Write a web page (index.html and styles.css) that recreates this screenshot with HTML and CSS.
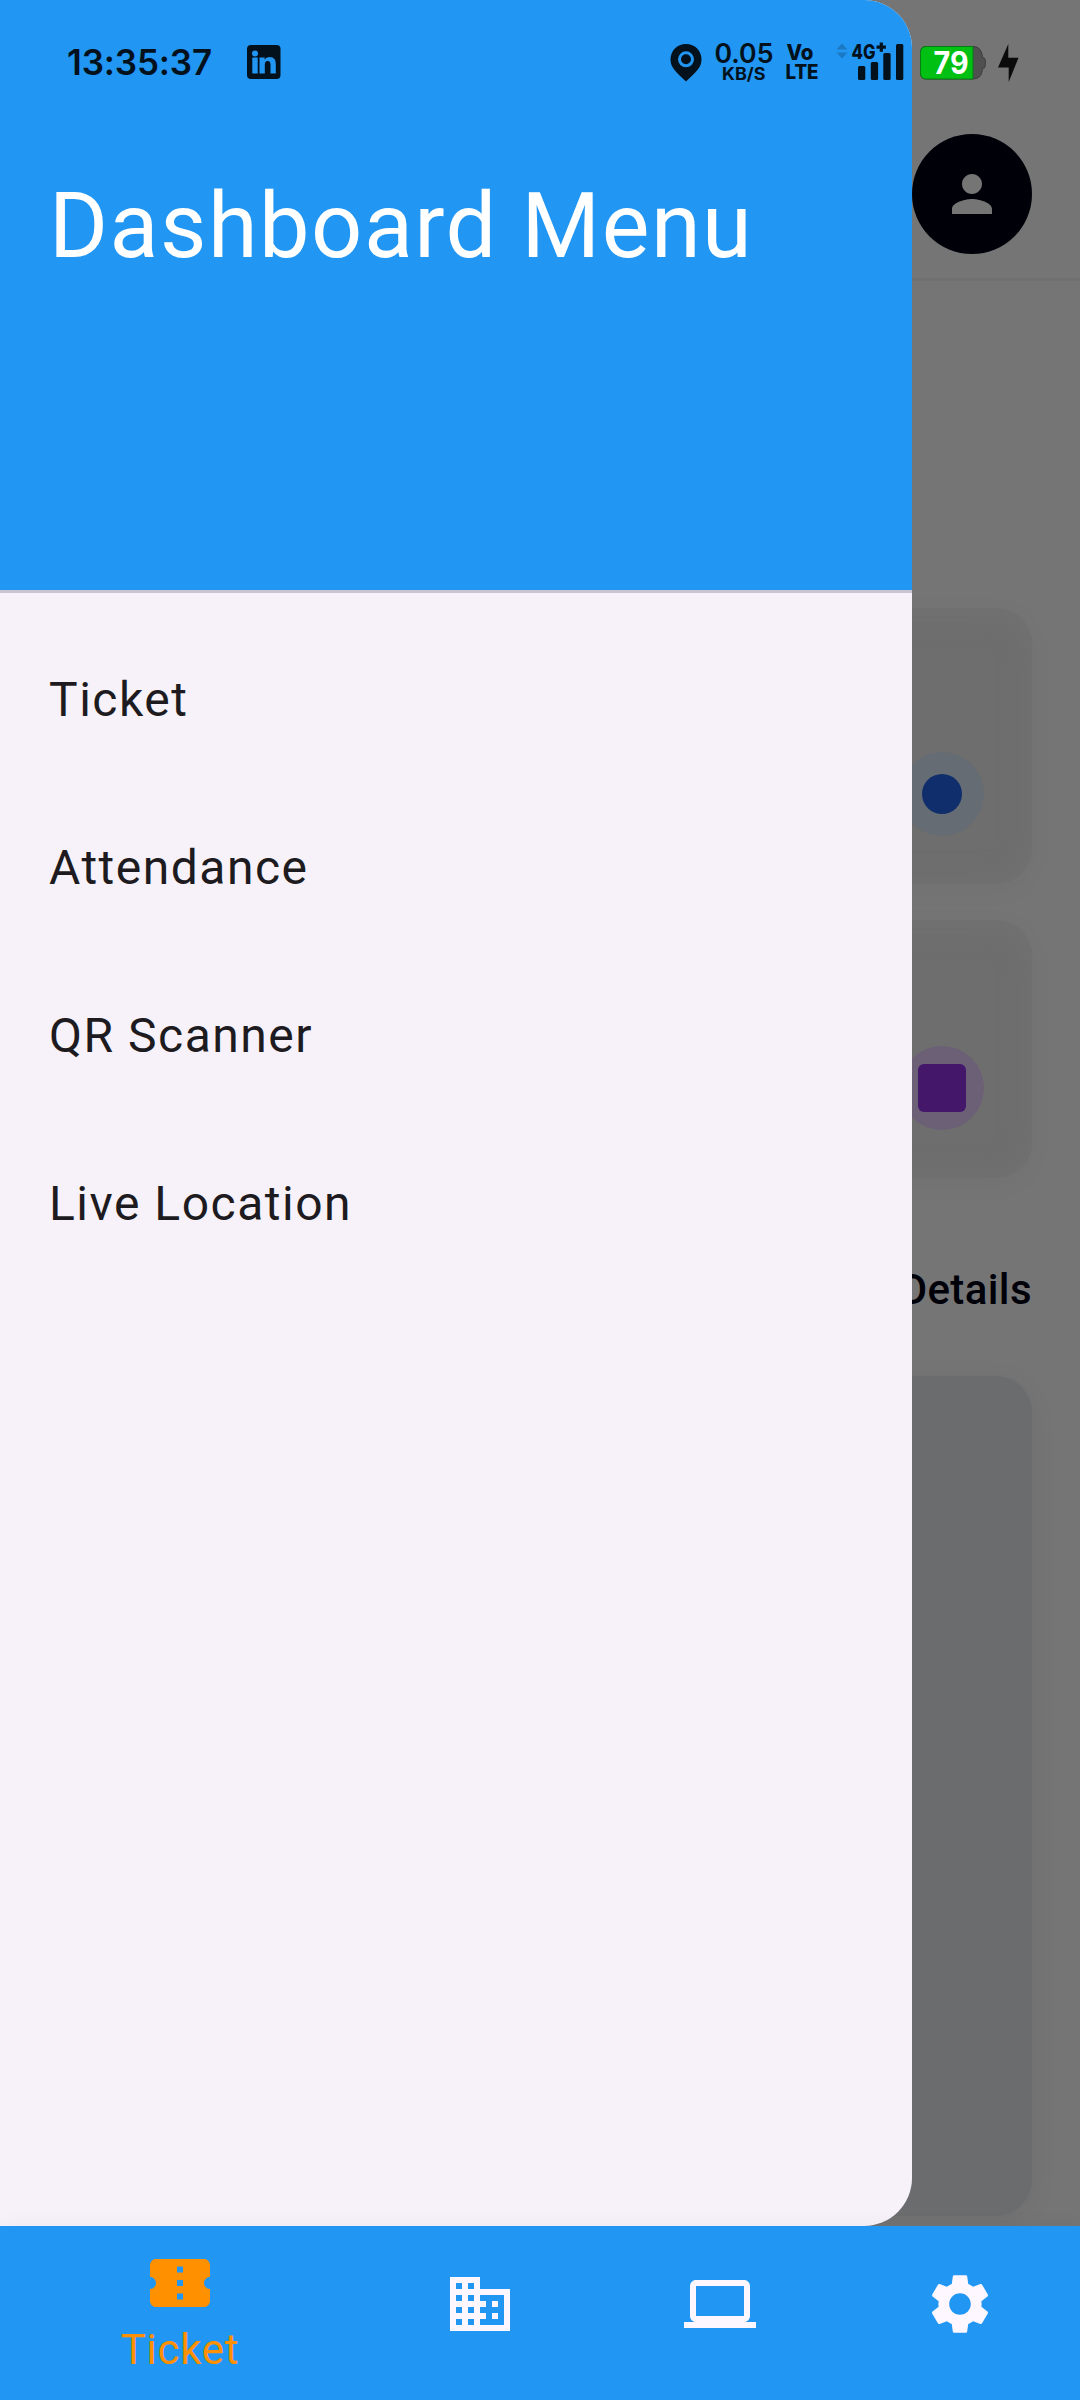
FILE: index.html
```html
<!DOCTYPE html>
<html lang="en">
<head>
<meta charset="utf-8">
<title>Dashboard</title>
<link rel="stylesheet" href="styles.css">
</head>
<body>
<div class="app">
  <main class="dashboard">
    <header class="topbar">
      <div class="avatar">
        <svg class="avatar-icon" viewBox="0 0 24 24"><path d="M12 12c2.21 0 4-1.79 4-4s-1.79-4-4-4-4 1.79-4 4 1.79 4 4 4zm0 2c-2.67 0-8 1.34-8 4v2h16v-2c0-2.66-5.33-4-8-4z"/></svg>
      </div>
    </header>
    <section class="content">
      <article class="card card-first"><div class="badge badge-blue"><span class="dot"></span></div></article>
      <article class="card card-second"><div class="badge badge-purple"><span class="square"></span></div></article>
      <h2 class="details">Details</h2>
      <div class="panel"></div>
    </section>
  </main>

  <aside class="drawer">
    <div class="drawer-header"><h1 class="drawer-title">Dashboard Menu</h1></div>
    <ul class="menu">
      <li class="menu-item">Ticket</li>
      <li class="menu-item">Attendance</li>
      <li class="menu-item">QR Scanner</li>
      <li class="menu-item">Live Location</li>
    </ul>
  </aside>

  <nav class="bottom-nav">
    <a class="nav-item nav-item-active">
      <svg class="nav-icon" viewBox="0 0 24 24"><path d="M22 10V6c0-1.110-.9-2-2-2H4c-1.100 0-1.990.89-1.990 2v4c1.100 0 1.990.9 1.990 2s-.89 2-2 2v4c0 1.100.9 2 2 2h16c1.100 0 2-.9 2-2v-4c-1.100 0-2-.9-2-2s.9-2 2-2zm-9 7.500h-2v-2h2v2zm0-4.500h-2v-2h2v2zm0-4.500h-2v-2h2v2z"/></svg>
      <span class="nav-label">Ticket</span>
    </a>
    <a class="nav-item">
      <svg class="nav-icon" viewBox="0 0 24 24"><path d="M12 7V3H2v18h20V7H12zM6 19H4v-2h2v2zm0-4H4v-2h2v2zm0-4H4V9h2v2zm0-4H4V5h2v2zm4 12H8v-2h2v2zm0-4H8v-2h2v2zm0-4H8V9h2v2zm0-4H8V5h2v2zm10 12h-8v-2h2v-2h-2v-2h2v-2h-2V9h8v10zm-2-8h-2v2h2v-2zm0 4h-2v2h2v-2z"/></svg>
    </a>
    <a class="nav-item">
      <svg class="nav-icon" viewBox="0 0 24 24"><path d="M20 18c1.100 0 2-.9 2-2V6c0-1.100-.9-2-2-2H4c-1.100 0-2 .9-2 2v10c0 1.100.9 2 2 2H0v2h24v-2h-4zM4 6h16v10H4V6z"/></svg>
    </a>
    <a class="nav-item">
      <svg class="nav-icon" viewBox="0 0 24 24"><path d="M19.140 12.940c.04-.3.06-.61.06-.94 0-.32-.02-.64-.07-.94l2.030-1.580c.18-.14.23-.41.12-.61l-1.920-3.320c-.12-.22-.37-.29-.59-.22l-2.390.96c-.5-.38-1.030-.7-1.620-.94L14.400 2.810c-.04-.24-.24-.41-.48-.41h-3.840c-.24 0-.43.17-.47.41L9.250 5.350c-.59.24-1.130.57-1.620.94l-2.390-.96c-.22-.08-.47 0-.59.22L2.740 8.870c-.12.21-.08.47.12.61l2.030 1.580c-.05.3-.09.63-.09.94s.02.64.07.94l-2.030 1.580c-.18.14-.23.41-.12.61l1.920 3.320c.12.22.37.29.59.22l2.390-.96c.5.38 1.030.7 1.620.94l.36 2.540c.05.24.24.41.48.41h3.840c.24 0 .44-.17.47-.41l.36-2.540c.59-.24 1.130-.56 1.620-.94l2.390.96c.22.08.47 0 .59-.22l1.920-3.320c.12-.22.07-.47-.12-.61l-2.010-1.580zM12 15.600c-1.980 0-3.600-1.620-3.600-3.600s1.620-3.600 3.600-3.600 3.600 1.620 3.600 3.600-1.620 3.600-3.600 3.600z"/></svg>
    </a>
  </nav>

  <div class="status-bar">
    <span class="clock">13:35:37</span>
    <svg class="linkedin" viewBox="0 0 34 34" width="34" height="34"><rect width="33.500" height="34" rx="4"/><g class="cutout"><circle cx="8" cy="8.600" r="3"/><path d="M5.300 12.500h5.400v16H5.300zM12.500 12.500h5.100v2.200c1-1.700 2.800-2.600 5-2.600 4.600 0 6.200 2.900 6.200 6.900v9.500h-5.300v-8.500c0-2-.5-4-2.800-4s-2.900 2-2.900 4v8.500h-5.300z"/></g></svg>
    <svg class="signals" viewBox="0 0 360 46" width="360" height="46">
      <path fill-rule="evenodd" d="M16 4C7 4 .5 10.800.5 19.500c0 8 5 12 15.500 22 10.500-10 15.500-14 15.500-22C31.500 10.800 25 4 16 4zM16 11.300a8 8 0 1 1 0 16 8 8 0 0 1 0-16zM16 14.300a5 5 0 1 0 0 10 5 5 0 0 0 0-10z"/>
      <text class="t-rate" x="44.500" y="23" textLength="59" lengthAdjust="spacingAndGlyphs">0.05</text>
      <text class="t-unit" x="52" y="39.500" textLength="43.500" lengthAdjust="spacingAndGlyphs">KB/S</text>
      <text class="t-vo" x="116.500" y="20" textLength="27" lengthAdjust="spacingAndGlyphs">Vo</text>
      <text class="t-lte" x="115.500" y="39" textLength="33" lengthAdjust="spacingAndGlyphs">LTE</text>
      <path class="arrows" d="M172 3.500l5.500 6h-11zM172 18.500l5.500-6h-11z"/>
      <text class="t-net" x="181.500" y="18.500" textLength="24" lengthAdjust="spacingAndGlyphs">4G</text>
      <path d="M206.500 5.500h3.200v-3h3.200v3h3v3.200h-3v3h-3.200v-3h-3.200z"/>
      <rect x="188" y="26" width="7.300" height="14" rx="1.500"/><rect x="200.800" y="22" width="7.300" height="18" rx="1.500"/><rect x="213.300" y="13" width="7.300" height="27" rx="1.500"/><rect x="226" y="4" width="7.300" height="36" rx="1.500"/>
      <path class="battery-shell" d="M256 6.500h47q8 0 9.300 9v2q3 0 3 3v5q0 3-3 3v2q-1.300 8.500-9.300 8.500h-47q-5.500 0-5.500-6v-20.500q0-6 5.500-6z"/>
      <path class="battery-fill" d="M256.500 6.500h46.500v32.500h-46.500q-6 0-6-6v-20.500q0-6 6-6z"/>
      <text class="t-battery" x="263.500" y="34" textLength="35" lengthAdjust="spacingAndGlyphs">79</text>
      <path class="bolt" d="M338.300 4v13.800h10.200L338.700 42V27.500h-10.700z"/>
    </svg>
  </div>
</div>
</body>
</html>
```
FILE: styles.css
```css
* { box-sizing: border-box; }
body { margin: 0; font-family: Roboto, sans-serif; }
h1, h2, ul { margin: 0; padding: 0; font-weight: 400; list-style: none; }
svg { display: block; flex: none; overflow: visible; }

.app {
  position: relative;
  display: flex;
  flex-direction: column;
  width: 1080px;
  height: 2400px;
  overflow: hidden;
  background: #757575;
}

/* Dimmed dashboard behind the drawer */
.dashboard { height: 2226px; }
.topbar {
  display: flex;
  justify-content: flex-end;
  height: 281px;
  padding: 134px 48px 0;
  border-bottom: 3px solid #707070;
}
.avatar {
  display: grid;
  place-items: center;
  width: 120px;
  height: 120px;
  border-radius: 50%;
  background: #000009;
}
.avatar-icon { width: 60px; height: 60px; fill: #757575; }
.content { display: flex; flex-direction: column; padding: 327px 48px 0; }
.card {
  display: flex;
  justify-content: flex-end;
  align-items: flex-end;
  padding: 48px;
  border-radius: 36px;
  background: #6e6e6e;
  box-shadow: 0 6px 30px rgba(0, 0, 0, .03), inset 0 3px 30px #727272;
}
.card-first { height: 276px; margin-bottom: 36px; }
.card-second { height: 258px; }
.badge { display: grid; place-items: center; width: 84px; height: 84px; border-radius: 50%; }
.badge-blue { background: #666c73; }
.badge-purple { background: #6b6075; }
.dot { width: 40px; height: 40px; border-radius: 50%; background: #112e6c; }
.square { width: 48px; height: 48px; border-radius: 6px; background: #44176a; }
.details {
  margin-top: 82px;
  text-align: right;
  font-size: 42px;
  font-weight: 500;
  line-height: 60px;
  letter-spacing: .4px;
  color: #000009;
}
.panel {
  height: 840px;
  margin-top: 56px;
  border-radius: 36px;
  background: #6b6c6e;
  box-shadow: 0 6px 30px rgba(0, 0, 0, .05);
}

/* Navigation drawer */
.drawer {
  position: absolute;
  top: 0;
  left: 0;
  width: 912px;
  height: 2226px;
  overflow: hidden;
  border-radius: 0 48px 48px 0;
  background: #f7f2fa;
}
.drawer-header {
  height: 593px;
  padding: 167px 48px 0 49px;
  border-bottom: 3px solid #c9c4d1;
  background: #2196f3;
}
.drawer-title { font-size: 90px; line-height: 120px; letter-spacing: 1.5px; color: #fff; white-space: nowrap; }
.menu { padding-top: 22px; }
.menu-item {
  display: flex;
  align-items: center;
  height: 168px;
  padding: 0 49px;
  font-size: 48px;
  letter-spacing: 1.5px;
  color: #1d1b20;
}

/* Bottom navigation */
.bottom-nav {
  position: relative;
  display: grid;
  grid-template-columns: 360px repeat(3, 240px);
  height: 174px;
  background: #2196f3;
  box-shadow: 0 -3px 18px rgba(0, 0, 0, .03);
}
.nav-item { display: flex; flex-direction: column; align-items: center; padding-top: 42px; color: #fef7ff; }
.nav-item-active { padding-top: 21px; color: #ff9000; }
.nav-icon { width: 72px; height: 72px; fill: currentColor; }
.nav-label { margin-top: 4px; font-size: 42px; line-height: 54px; letter-spacing: .7px; }

/* System status bar */
.status-bar {
  position: absolute;
  top: 0;
  left: 0;
  display: flex;
  align-items: flex-start;
  width: 1080px;
  padding: 40px 50px 0 67px;
  font-family: Inter, sans-serif;
  fill: #02111c;
  color: #02111c;
}
.clock { width: 180px; font-size: 35px; font-weight: 600; line-height: 44px; letter-spacing: -.15px; white-space: nowrap; }
.linkedin { margin-top: 5px; }
.cutout { fill: #2196f3; }
.signals { margin-left: 389px; }
.arrows { fill: #1b79c3; }
.battery-shell { fill: #505050; stroke: #3c3c3c; }
.battery-fill { fill: #00c014; stroke: #067d10; }
.bolt { fill: #0b0b0b; }
.t-rate { font-size: 27px; font-weight: 600; }
.t-unit { font-size: 17px; font-weight: 700; }
.t-vo { font-size: 22px; font-weight: 800; }
.t-lte { font-size: 20px; font-weight: 800; }
.t-net { font-size: 20px; font-weight: 800; }
.t-battery { font-size: 31px; font-weight: 700; fill: #fff; }
```
